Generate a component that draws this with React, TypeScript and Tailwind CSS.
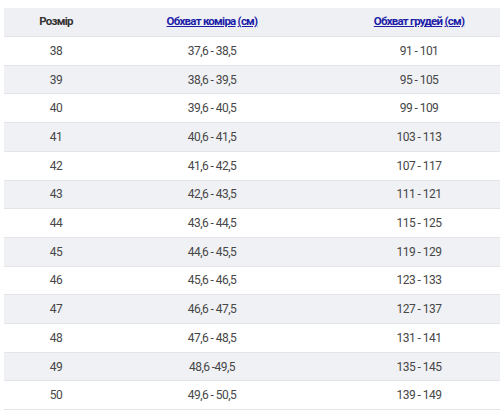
const rows: [string, string, string][] = [
  ["38", "37,6 - 38,5", "91 - 101"],
  ["39", "38,6 - 39,5", "95 - 105"],
  ["40", "39,6 - 40,5", "99 - 109"],
  ["41", "40,6 - 41,5", "103 - 113"],
  ["42", "41,6 - 42,5", "107 - 117"],
  ["43", "42,6 - 43,5", "111 - 121"],
  ["44", "43,6 - 44,5", "115 - 125"],
  ["45", "44,6 - 45,5", "119 - 129"],
  ["46", "45,6 - 46,5", "123 - 133"],
  ["47", "46,6 - 47,5", "127 - 137"],
  ["48", "47,6 - 48,5", "131 - 141"],
  ["49", "48,6 -49,5", "135 - 145"],
  ["50", "49,6 - 50,5", "139 - 149"],
];

export default function App() {
  return (
    <div className="w-[500px] h-[411px] overflow-hidden bg-white pt-2 pl-1 font-['Roboto',sans-serif]">
      <table className="w-[518px] border-collapse text-[12px] tracking-[-0.55px] text-[#474747]">
        <thead>
          <tr className="h-[28.6px] bg-[#eff0f3] border-b border-[#e3e5e9] text-[11.5px] tracking-[-0.75px]">
            <th className="w-[104px] text-center font-bold text-[#333]">Розмір</th>
            <th className="w-[208px] text-center font-bold">
              <a href="#" className="text-[#1c1ca8] underline">Обхват коміра</a>{" "}
              <a href="#" className="text-[#1c1ca8] underline">(см)</a>
            </th>
            <th className="text-center font-bold">
              <a href="#" className="text-[#1c1ca8] underline">Обхват грудей</a>{" "}
              <a href="#" className="text-[#1c1ca8] underline">(см)</a>
            </th>
          </tr>
        </thead>
        <tbody>
          {rows.map(([size, collar, chest], i) => (
            <tr
              key={size}
              className={`h-[28.7px] border-b border-[#e3e5e9] ${i % 2 === 1 ? "bg-[#f0f1f4]" : "bg-white"}`}
            >
              <td className="text-center">{size}</td>
              <td className="text-center">{collar}</td>
              <td className="text-center">{chest}</td>
            </tr>
          ))}
        </tbody>
      </table>
    </div>
  );
}
